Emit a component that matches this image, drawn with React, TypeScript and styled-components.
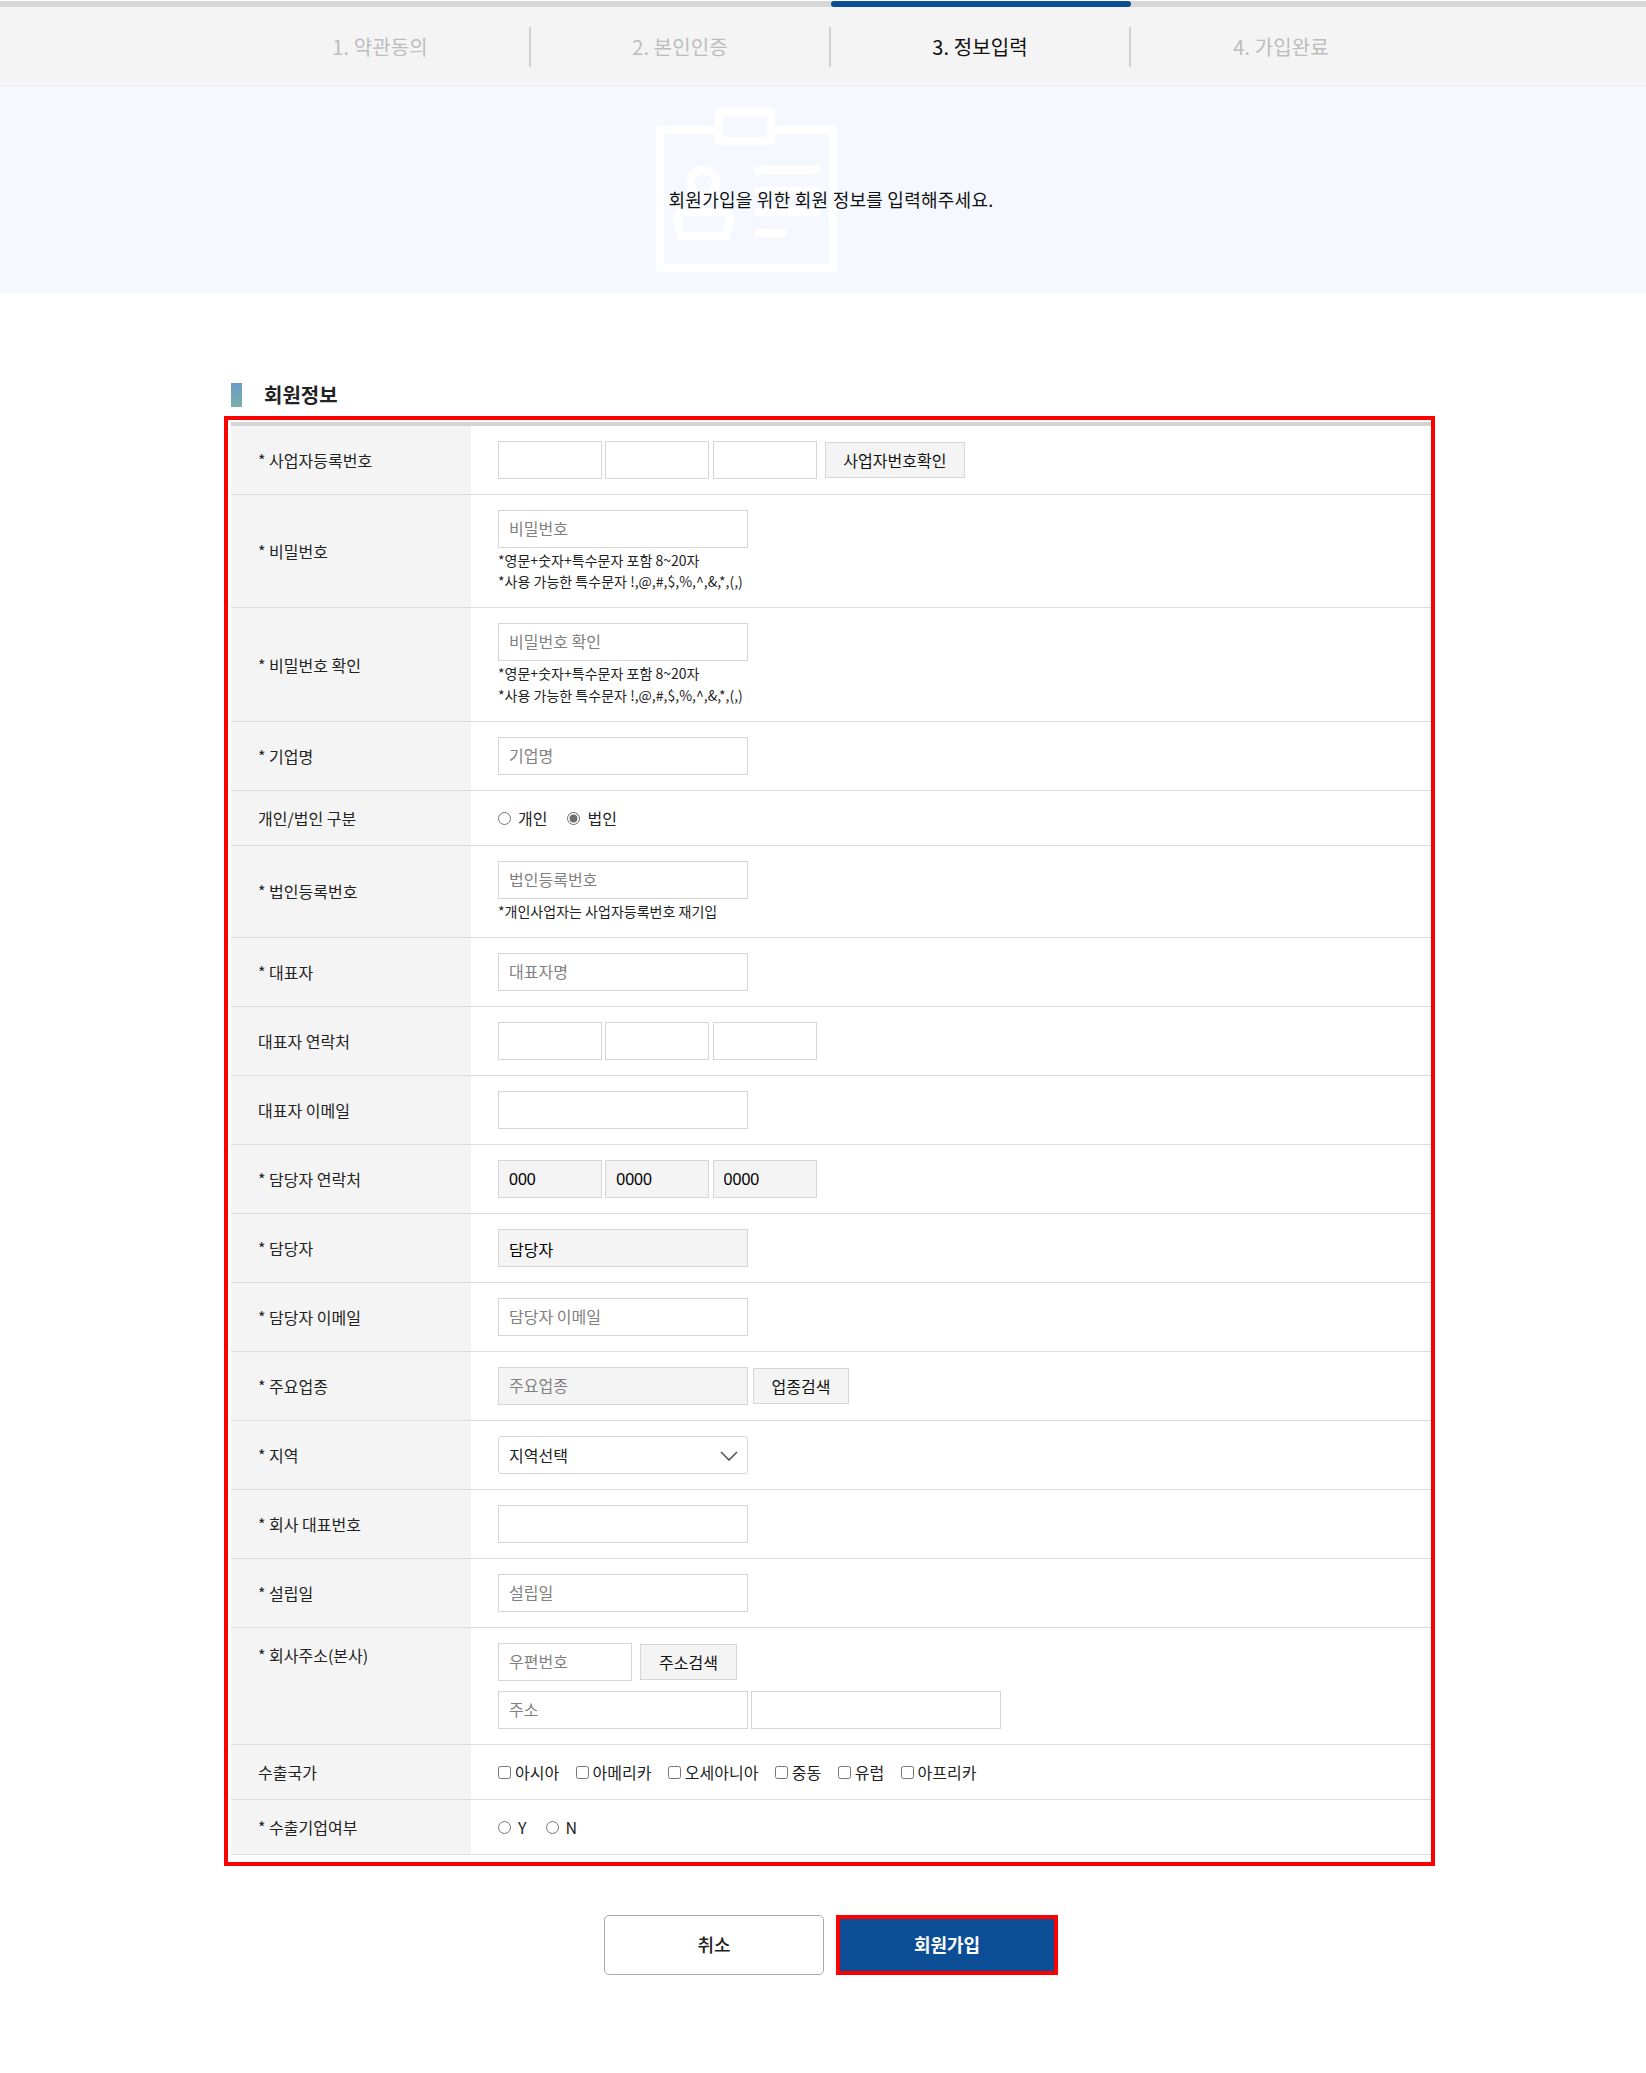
import React from 'react';
import styled, { createGlobalStyle } from 'styled-components';

const GlobalStyle = createGlobalStyle`
  html, body {
    margin: 0;
    padding: 0;
    overflow-x: hidden;
    background: #fff;
  }
  body {
    font-family: "Noto Sans CJK KR", "Noto Sans", sans-serif;
    font-size: 16px;
    color: #222;
  }
  * {
    box-sizing: border-box;
  }
`;

const STEPS = ['1. 약관동의', '2. 본인인증', '3. 정보입력', '4. 가입완료'];
const ACTIVE_STEP = 2;
const COUNTRIES = ['아시아', '아메리카', '오세아니아', '중동', '유럽', '아프리카'];
const PASSWORD_NOTES = [
  '*영문+숫자+특수문자 포함 8~20자',
  '*사용 가능한 특수문자 !,@,#,$,%,^,&,*,(,)',
];

const App: React.FC = () => {
  return (
    <Page>
      <GlobalStyle />
      <StepTrack>
        <StepTrackFill />
      </StepTrack>
      <StepBar>
        <StepList>
          {STEPS.map((step, i) => (
            <Step key={step} $active={i === ACTIVE_STEP} $last={i === STEPS.length - 1}>
              {step}
            </Step>
          ))}
        </StepList>
      </StepBar>
      <Hero>
        <HeroIcon />
        <HeroText>회원가입을 위한 회원 정보를 입력해주세요.</HeroText>
      </Hero>

      <Container>
        <SectionTitle>회원정보</SectionTitle>
        <FormBox>
          <TopRule />
          <Row label="* 사업자등록번호">
            <Inline>
              <PhoneGroup />
              <SideButton $width={140.5} $gap={8}>사업자번호확인</SideButton>
            </Inline>
          </Row>
          <Row label="* 비밀번호">
            <TextInput placeholder="비밀번호" />
            <Notes lines={PASSWORD_NOTES} />
          </Row>
          <Row label="* 비밀번호 확인">
            <TextInput placeholder="비밀번호 확인" />
            <Notes lines={PASSWORD_NOTES} />
          </Row>
          <Row label="* 기업명">
            <TextInput placeholder="기업명" />
          </Row>
          <Row label="개인/법인 구분">
            <Choices $gap={20}>
              <Choice>
                <input type="radio" name="kind" />
                개인
              </Choice>
              <Choice>
                <input type="radio" name="kind" defaultChecked />
                법인
              </Choice>
            </Choices>
          </Row>
          <Row label="* 법인등록번호">
            <TextInput placeholder="법인등록번호" />
            <Notes lines={['*개인사업자는 사업자등록번호 재기입']} />
          </Row>
          <Row label="* 대표자">
            <TextInput placeholder="대표자명" />
          </Row>
          <Row label="대표자 연락처">
            <PhoneGroup />
          </Row>
          <Row label="대표자 이메일">
            <TextInput />
          </Row>
          <Row label="* 담당자 연락처">
            <PhoneGroup values={['000', '0000', '0000']} />
          </Row>
          <Row label="* 담당자">
            <TextInput $filled readOnly value="담당자" />
          </Row>
          <Row label="* 담당자 이메일">
            <TextInput placeholder="담당자 이메일" />
          </Row>
          <Row label="* 주요업종">
            <Inline>
              <TextInput $filled readOnly placeholder="주요업종" />
              <SideButton $width={96} $gap={5}>업종검색</SideButton>
            </Inline>
          </Row>
          <Row label="* 지역">
            <SelectWrap>
              <Select defaultValue="">
                <option value="">지역선택</option>
              </Select>
              <Chevron viewBox="0 0 18 10" fill="none">
                <path d="M1 1l8 8 8-8" stroke="#555" strokeWidth="1.6" />
              </Chevron>
            </SelectWrap>
          </Row>
          <Row label="* 회사 대표번호">
            <TextInput />
          </Row>
          <Row label="* 설립일">
            <TextInput placeholder="설립일" />
          </Row>
          <Row label="* 회사주소(본사)" $top>
            <Inline>
              <TextInput $width={134} placeholder="우편번호" />
              <SideButton $width={97} $gap={8}>주소검색</SideButton>
            </Inline>
            <AddressLine>
              <TextInput placeholder="주소" />
              <TextInput />
            </AddressLine>
          </Row>
          <Row label="수출국가">
            <Choices $gap={16.4}>
              {COUNTRIES.map((country) => (
                <Choice key={country} $tight>
                  <input type="checkbox" />
                  {country}
                </Choice>
              ))}
            </Choices>
          </Row>
          <Row label="* 수출기업여부">
            <Choices $gap={19}>
              <Choice>
                <input type="radio" name="export" />Y
              </Choice>
              <Choice>
                <input type="radio" name="export" />N
              </Choice>
            </Choices>
          </Row>
        </FormBox>

        <Actions>
          <CancelButton type="button">취소</CancelButton>
          <JoinButton type="button">회원가입</JoinButton>
        </Actions>
      </Container>
    </Page>
  );
};

interface RowProps {
  label: string;
  $top?: boolean;
  children: React.ReactNode;
}

const Row: React.FC<RowProps> = ({ label, $top, children }) => (
  <RowGrid>
    <RowLabel $top={$top}>{label}</RowLabel>
    <RowValue>{children}</RowValue>
  </RowGrid>
);

const PhoneGroup: React.FC<{ values?: string[] }> = ({ values }) => (
  <PhoneInputs>
    {[0, 1, 2].map((i) => (
      <TextInput
        key={i}
        $width={104}
        $filled={!!values}
        readOnly={!!values}
        value={values ? values[i] : undefined}
      />
    ))}
  </PhoneInputs>
);

const Notes: React.FC<{ lines: string[] }> = ({ lines }) => (
  <NoteBlock>
    {lines.map((line) => (
      <div key={line}>{line}</div>
    ))}
  </NoteBlock>
);

const HeroIcon: React.FC = () => (
  <HeroSvg viewBox="0 0 182 165" fill="none" stroke="#fff" strokeWidth="8" strokeLinejoin="round" strokeLinecap="round">
    <rect x="4" y="22" width="173" height="138" />
    <rect x="63" y="4" width="52" height="29" fill="#f5f9ff" />
    <circle cx="47" cy="75" r="13" />
    <path d="M25 128L21 111Q20 104 30 104L66 104Q75 104 74 111L70 128Z" />
    <path d="M102 62H161M102 83H161M102 104H161M102 125H127" />
  </HeroSvg>
);

const Page = styled.div`
  width: 1662px;
  min-height: 2073px;
  background: #fff;
`;

const StepTrack = styled.div`
  height: 7px;
  border-top: 1px solid #fff;
  background: #d8d8d8;
  position: relative;
`;

const StepTrackFill = styled.div`
  position: absolute;
  left: 831px;
  top: 0;
  width: 300px;
  height: 6px;
  background: #0c4e96;
  border-radius: 3px;
`;

const StepBar = styled.div`
  height: 80px;
  background: #f4f4f4;
  display: flex;
  align-items: center;
  justify-content: center;
`;

const StepList = styled.div`
  display: flex;
  width: 1200px;
`;

const Step = styled.div<{ $active: boolean; $last: boolean }>`
  width: 300px;
  height: 40px;
  line-height: 40px;
  text-align: center;
  font-size: 20px;
  letter-spacing: 0.1px;
  color: ${({ $active }) => ($active ? '#111' : '#bdbdbd')};
  border-right: ${({ $last }) => ($last ? 'none' : '2px solid #d2d2d2')};
`;

const Hero = styled.div`
  position: relative;
  height: 206px;
  background: #f5f9ff;
  display: flex;
  align-items: center;
  justify-content: center;
`;

const HeroSvg = styled.svg`
  position: absolute;
  left: 656px;
  top: 21px;
  width: 182px;
  height: 165px;
`;

const HeroText = styled.p`
  position: relative;
  margin: 18px 0 0;
  font-size: 18px;
  line-height: 26px;
  letter-spacing: 0.25px;
  color: #111;
`;

const Container = styled.div`
  width: 1200px;
  margin: 0 auto;
`;

const SectionTitle = styled.h2`
  margin: 90px 0 0;
  height: 24px;
  padding-left: 33px;
  font-size: 20px;
  line-height: 24px;
  font-weight: 700;
  color: #222;
  position: relative;

  &:before {
    content: '';
    position: absolute;
    left: 0;
    top: 0;
    width: 11px;
    height: 24px;
    background: linear-gradient(180deg, #6a9bc6, #7bb0a6);
  }
`;

const FormBox = styled.div`
  margin: 9px -4px 0 -7px;
  border: 4px solid #ff0000;
  padding: 2px 0 7px 3px;
`;

const TopRule = styled.div`
  height: 4px;
  background: #d4d4d4;
`;

const RowGrid = styled.div`
  display: grid;
  grid-template-columns: 240px 1fr;
  border-bottom: 1px solid #dcdcdc;
`;

const RowLabel = styled.div<{ $top?: boolean }>`
  display: flex;
  align-items: ${({ $top }) => ($top ? 'flex-start' : 'center')};
  padding: ${({ $top }) => ($top ? '15px' : '0')} 0 0 27px;
  background: #f4f4f4;
  font-size: 16px;
  line-height: 24px;
  color: #222;
`;

const RowValue = styled.div`
  padding: 15px 27px;
  min-height: 54px;
  display: flex;
  flex-direction: column;
  justify-content: center;
`;

const Inline = styled.div`
  display: flex;
  align-items: center;
`;

const PhoneInputs = styled.div`
  display: flex;
  gap: 3.3px;
`;

const AddressLine = styled.div`
  display: flex;
  gap: 3px;
  margin-top: 10px;
`;

const TextInput = styled.input<{ $width?: number; $filled?: boolean }>`
  display: block;
  flex: none;
  width: ${({ $width }) => $width ?? 250}px;
  height: 38px;
  padding: 2px 10px 0;
  border: 1.5px solid #d6d6d6;
  border-radius: 0;
  outline: none;
  background: ${({ $filled }) => ($filled ? '#f4f4f4' : '#fff')};
  font-family: "Liberation Sans", "Noto Sans CJK KR", sans-serif;
  font-size: 16px;
  color: #000;

  &::placeholder {
    font-family: "Noto Sans CJK KR", sans-serif;
    color: #808080;
    opacity: 1;
  }
`;

const SideButton = styled.button<{ $width: number; $gap: number }>`
  flex: none;
  width: ${({ $width }) => $width}px;
  height: 36px;
  margin-left: ${({ $gap }) => $gap}px;
  padding: 0;
  border: 1px solid #d6d6d6;
  background: #f4f4f4;
  font-family: inherit;
  font-size: 16px;
  color: #111;
`;

const NoteBlock = styled.div`
  margin-top: 2px;
  font-size: 14px;
  line-height: 21.2px;
  letter-spacing: 0.02px;
  color: #222;
`;

const Choices = styled.div<{ $gap: number }>`
  display: flex;
  gap: ${({ $gap }) => $gap}px;
  height: 24px;
  align-items: center;
`;

const Choice = styled.label<{ $tight?: boolean }>`
  display: flex;
  align-items: center;
  font-size: 16px;
  line-height: 24px;
  color: #222;

  input {
    width: 13px;
    height: 13px;
    margin: 1px ${({ $tight }) => ($tight ? '4px' : '7px')} 0 0;
    accent-color: #6e6e6e;
  }
`;

const SelectWrap = styled.div`
  position: relative;
  width: 250px;
`;

const Select = styled.select`
  display: block;
  width: 250px;
  height: 38px;
  padding: 0 10px;
  appearance: none;
  border: 1.5px solid #d6d6d6;
  border-radius: 3px;
  background: #fff;
  font-family: inherit;
  font-size: 16px;
  color: #222;
`;

const Chevron = styled.svg`
  position: absolute;
  right: 10px;
  top: 15px;
  width: 18px;
  height: 10px;
  pointer-events: none;
`;

const Actions = styled.div`
  display: flex;
  justify-content: center;
  gap: 12px;
  margin-top: 49px;
`;

const CancelButton = styled.button`
  width: 220px;
  height: 60px;
  padding: 0 0 2px;
  border: 1.5px solid #aaa;
  border-radius: 5px;
  background: #fff;
  font-family: inherit;
  font-size: 18px;
  font-weight: 500;
  color: #222;
`;

const JoinButton = styled.button`
  width: 222px;
  height: 60px;
  padding: 0 0 2px;
  border: 4px solid #ff0000;
  background: #0c4e96;
  font-family: inherit;
  font-size: 18px;
  font-weight: 700;
  color: #fff;
`;

export default App;
